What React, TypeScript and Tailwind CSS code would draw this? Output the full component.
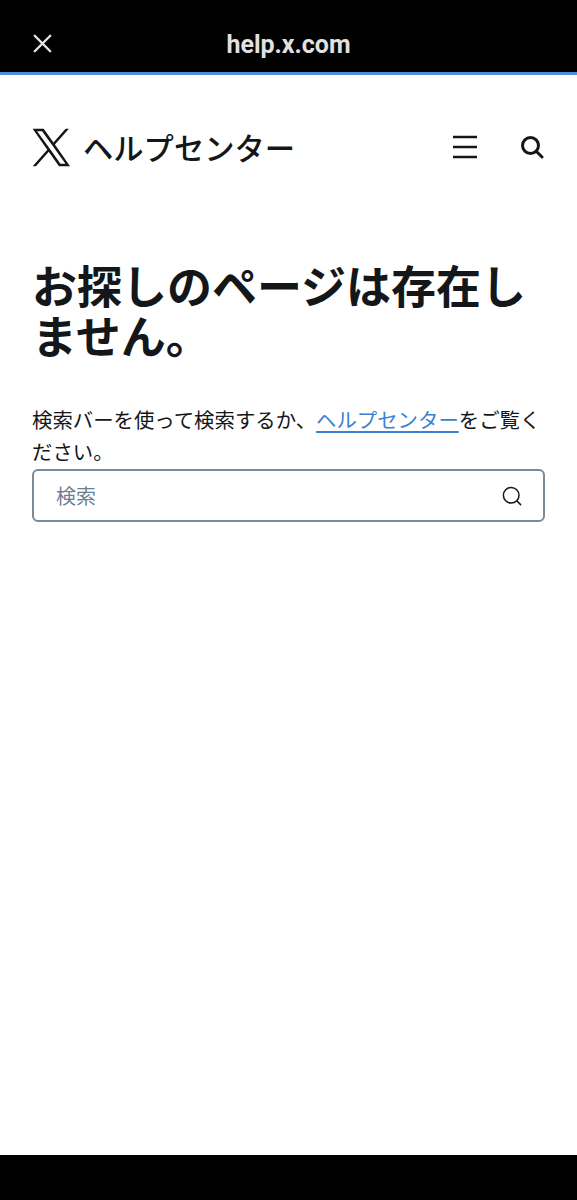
import { X } from 'lucide-react'

const jp = "font-['Noto_Sans_CJK_JP','Liberation_Sans',sans-serif]"

export default function App() {
  return (
    <div className={`flex h-[1200px] w-[577px] flex-col overflow-hidden bg-white text-[#14171a] ${jp}`}>
      {/* Browser bar */}
      <div className="flex h-[75px] shrink-0 flex-col bg-black">
        <div className="relative flex flex-1 items-center justify-center pt-[16px]">
          <X className="absolute left-[27px] top-[28px] h-[31px] w-[31px] text-[#e7e7e7]" strokeWidth={1.8} />
          <span className="font-['Roboto',sans-serif] text-[25px] font-bold leading-none text-[#e1e1e1]">help.x.com</span>
        </div>
        <div className="h-[3px] bg-[#4a90d9]" />
      </div>

      {/* Header */}
      <header className="flex h-[144px] shrink-0 items-center justify-between pl-[32px] pr-[33px]">
        <div className="flex items-center gap-[12px]">
          <svg viewBox="0 0 24 24" className="h-[39px] w-[39px]" fill="#14171a">
            <path d="M14.1 10.2 22.7.5h-2l-7.5 8.4L7.2.5H.4l9 12.9L.4 23.5h2l7.9-8.9 6.3 8.9h6.8zm-2.8 3.1-.9-1.3L3.1 2h3.1l5.9 8.1.9 1.3 7.6 10.6h-3.1z" />
          </svg>
          <span className="text-[30.3px] font-medium leading-none">ヘルプセンター</span>
        </div>
        <div className="flex items-center gap-[42px]">
          <svg viewBox="0 0 26 24" className="h-[24px] w-[26px]" stroke="#14171a" strokeWidth="2.4">
            <path d="M1 2h24M1 12h24M1 22h24" />
          </svg>
          <svg viewBox="0 0 24 24" className="h-[24px] w-[24px]" fill="none" stroke="#14171a" strokeWidth="3" strokeLinecap="round">
            <circle cx="10.5" cy="10.5" r="8" />
            <path d="m17 17 5 5" />
          </svg>
        </div>
      </header>

      {/* Content */}
      <main className="px-[32px] pt-[41px]">
        <h1 className="text-[45px] font-bold leading-[50px]">お探しのページは存在しません。</h1>
        <p className="mt-[43px] text-[20.4px] leading-[32px] text-[#14171a]">
          検索バーを使って検索するか、<a className="text-[#3a83d0] underline underline-offset-[3px]">ヘルプセンター</a>をご覧ください。
        </p>
        <div className="mt-[2px] flex h-[53px] items-center justify-between rounded-[6px] border-2 border-[#7b8a9a] pl-[22px] pr-[21px]">
          <span className="text-[20px] text-[#6c7f93]">検索</span>
          <svg viewBox="0 0 20 20" className="h-[20px] w-[20px]" fill="none" stroke="#14171a" strokeWidth="1.5" strokeLinecap="round">
            <circle cx="9.2" cy="9.2" r="7.8" />
            <path d="m15 15 3.6 3.6" />
          </svg>
        </div>
      </main>

      <div className="flex-1" />
      <div className="h-[45px] shrink-0 bg-black" />
    </div>
  )
}
